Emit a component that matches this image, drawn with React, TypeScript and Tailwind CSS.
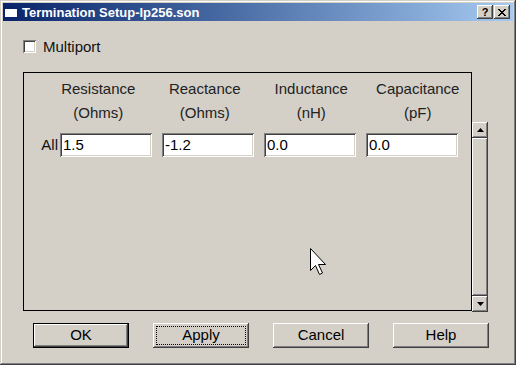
import React from "react";

const raised =
  "bg-[#d4d0c8] shadow-[inset_-1px_-1px_#404040,inset_1px_1px_#ffffff,inset_-2px_-2px_#808080,inset_2px_2px_#d4d0c8]";
const sunken =
  "bg-white shadow-[inset_1px_1px_#808080,inset_-1px_-1px_#ffffff,inset_2px_2px_#404040,inset_-2px_-2px_#d4d0c8]";

const headers = [
  ["Resistance", "(Ohms)"],
  ["Reactance", "(Ohms)"],
  ["Inductance", "(nH)"],
  ["Capacitance", "(pF)"],
];
const values = ["1.5", "-1.2", "0.0", "0.0"];

function Btn({ label, def, focus }: { label: string; def?: boolean; focus?: boolean }) {
  return (
    <div className={`w-[96px] h-[25px] ${def ? "border border-black" : ""}`}>
      <div className={`w-full h-full ${raised} flex items-center justify-center p-[3px]`}>
        <div
          className={`w-full h-full flex items-center justify-center text-[15px] text-black ${
            focus ? "border border-dotted border-black" : ""
          }`}
        >
          {label}
        </div>
      </div>
    </div>
  );
}

export default function App() {
  return (
    <div
      className="relative w-[516px] h-[365px] bg-[#d4d0c8] p-[3px] font-['Liberation_Sans',Arial,sans-serif] text-[#111] shadow-[inset_-1px_-1px_#404040,inset_1px_1px_#d4d0c8,inset_-2px_-2px_#808080,inset_2px_2px_#ffffff]"
    >
      {/* title bar */}
      <div className="h-[18px] flex items-center bg-linear-to-r from-[#0a246a] to-[#a6caf0]">
        <div className="ml-[1px] w-[14px] h-[12px] bg-white border border-[#0a246a] border-t-[3px]" />
        <span className="ml-[4px] text-white font-bold text-[13px] leading-none">
          Termination Setup-lp256.son
        </span>
        <div className="ml-auto flex gap-[1px] mr-[3px]">
          <div className={`w-[16px] h-[14px] ${raised} flex items-center justify-center text-[11px] font-bold text-black leading-none`}>
            ?
          </div>
          <div className={`w-[16px] h-[14px] ${raised} flex items-center justify-center`}>
            <svg width="8" height="7" viewBox="0 0 8 7">
              <path d="M0 0L7 7M1 0L8 7M7 0L0 7M8 0L1 7" stroke="black" strokeWidth="1" />
            </svg>
          </div>
        </div>
      </div>

      {/* checkbox */}
      <div className="flex items-center ml-[20px] mt-[19px] h-[13px]">
        <div className={`w-[13px] h-[13px] ${sunken}`} />
        <span className="ml-[7px] text-[15px] leading-none">Multiport</span>
      </div>

      {/* group + scrollbar */}
      <div className="flex ml-[20px] mt-[19px]">
        <div className="w-[449px] h-[239px] border border-black">
          <div className="flex pl-[21px] pt-[4px] text-[15px] leading-[24px] text-[#222]">
            {headers.map(([a, b], i) => (
              <div key={i} className="w-[107px] flex flex-col items-center">
                <span>{a}</span>
                <span>{b}</span>
              </div>
            ))}
          </div>
          <div className="flex items-center mt-[8px]">
            <span className="w-[36px] text-right pr-[2px] text-[15px]">All</span>
            <div className="flex gap-[10px]">
              {values.map((v, i) => (
                <div key={i} className={`w-[92px] h-[24px] ${sunken} flex items-center pl-[3px] text-[15px] text-black`}>
                  {v}
                </div>
              ))}
            </div>
          </div>
        </div>
        <div className="w-[16px] h-[190px] mt-[50px] flex flex-col">
          <div className={`w-[16px] h-[16px] ${raised} flex items-center justify-center`}>
            <svg width="7" height="4" viewBox="0 0 7 4">
              <path d="M3.5 0L7 4H0Z" fill="black" />
            </svg>
          </div>
          <div className={`w-[16px] flex-1 ${raised}`} />
          <div className={`w-[16px] h-[16px] ${raised} flex items-center justify-center`}>
            <svg width="7" height="4" viewBox="0 0 7 4">
              <path d="M0 0H7L3.5 4Z" fill="black" />
            </svg>
          </div>
        </div>
      </div>

      {/* buttons */}
      <div className="flex gap-[24px] ml-[30px] mt-[11px]">
        <Btn label="OK" def />
        <Btn label="Apply" focus />
        <Btn label="Cancel" />
        <Btn label="Help" />
      </div>

      {/* mouse cursor */}
      <svg className="absolute left-[310px] top-[248px]" width="18" height="29" viewBox="0 0 18 29">
        <path
          d="M0.5 0.5V22.5L5.5 17.5L9.5 26.5L12.5 25L8.5 16.5H15.5Z"
          fill="white"
          stroke="black"
          strokeWidth="1"
        />
      </svg>
    </div>
  );
}
